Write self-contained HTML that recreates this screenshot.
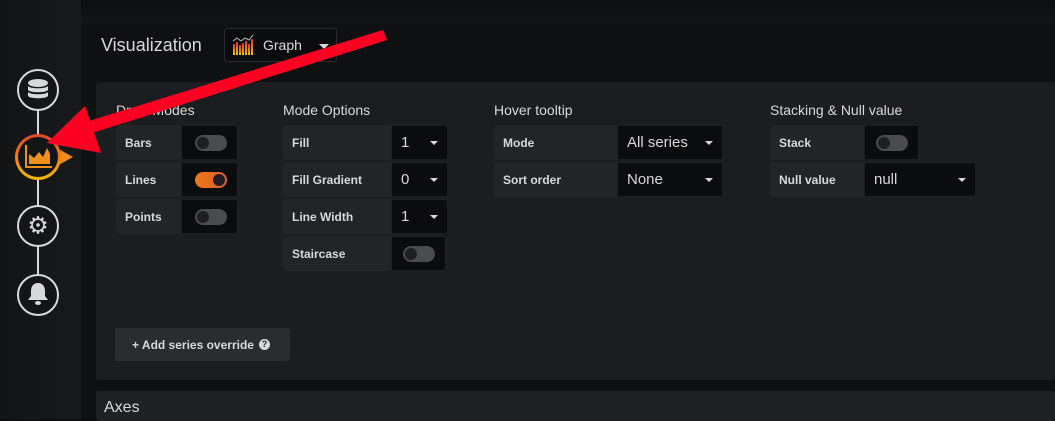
<!DOCTYPE html>
<html><head><style>
*{box-sizing:border-box;margin:0;padding:0}
body{width:1055px;height:419px;overflow:hidden;background:linear-gradient(180deg,#0c0d0f,#161719 30px);font-family:"Liberation Sans",sans-serif;color:#d8d9da;position:relative}
.abs{position:absolute}
.side{left:0;top:0;width:81px;height:419px;background:linear-gradient(90deg,#131416,#18191b)}
.main{left:81px;top:23px;width:974px;height:396px;background:#0f1012}
.panel{left:96px;top:82px;width:959px;height:298px;background:#1c1d20;border-radius:3px}
.axes{left:96px;top:391px;width:959px;height:30px;background:#202124;border-radius:3px;font-size:16px;padding:8px 0 0 8px;color:#d8d9da}
.h{font-size:14px;color:#d8d9da}
.lab{background:#232427;border-radius:3px 0 0 3px;font-size:12px;font-weight:bold;padding-left:9px;display:flex;align-items:center;height:35px;color:#d8d9da}
.val{background:#0b0c0e;border-radius:0 3px 3px 0;height:35px;display:flex;align-items:center;font-size:15px;padding-left:9px;color:#d8d9da;border:1px solid #1e1f22}
.car{position:absolute;right:9px;top:15px;width:0;height:0;border-left:4px solid transparent;border-right:4px solid transparent;border-top:4px solid #d8d9da}
.sw{width:32px;height:16px;border-radius:8px;background:#4a4b4d;position:relative}
.sw::after{content:"";position:absolute;left:2px;top:2px;width:12px;height:12px;border-radius:50%;background:#1e1f21}
.sw.on{background:linear-gradient(90deg,#eb7b18,#e05a2a)}
.sw.on::after{left:18px}
.circ{width:42px;height:42px;border-radius:50%;border:2px solid #d8d9da;left:17px;background:#141517}
</style></head><body>
<div class="abs side"></div>
<div class="abs" style="left:37px;top:108px;width:2px;height:170px;background:#d8d9da"></div>
<div class="abs main"></div>
<div class="abs" style="left:101px;top:35px;font-size:18px">Visualization</div>
<div class="abs" style="left:224px;top:28px;width:113px;height:34px;border:1px solid #2a2b2e;border-radius:3px;background:#0b0c0e"></div>
<svg class="abs" style="left:232px;top:35px" width="22" height="20"><defs><linearGradient id="g" x1="0" y1="1" x2="0" y2="0"><stop offset="0" stop-color="#f5c400"/><stop offset="1" stop-color="#e02f2f"/></linearGradient></defs><g fill="url(#g)"><rect x="1" y="9" width="2" height="11"/><rect x="4" y="7" width="2" height="13"/><rect x="7" y="10" width="2" height="10"/><rect x="10" y="8" width="2" height="12"/><rect x="13" y="6" width="2" height="14"/><rect x="16" y="9" width="2" height="11"/><rect x="19" y="4" width="2" height="16"/></g><polyline points="1,6 5,3 9,6 13,3 17,5 21,0" fill="none" stroke="#bbb" stroke-width="1"/></svg>
<div class="abs" style="left:263px;top:37px;font-size:14px">Graph</div>
<div class="abs" style="left:319px;top:44px;border-left:5px solid transparent;border-right:5px solid transparent;border-top:5px solid #d8d9da"></div>
<div class="abs panel"></div>
<div class="abs h" style="left:116px;top:102px">Draw Modes</div>
<div class="abs h" style="left:283px;top:102px">Mode Options</div>
<div class="abs h" style="left:494px;top:102px">Hover tooltip</div>
<div class="abs h" style="left:770px;top:102px">Stacking &amp; Null value</div>

<div class="abs lab" style="left:116px;top:125px;width:65px">Bars</div><div class="abs val" style="left:181px;top:125px;width:57px"><div class="sw" style="margin-left:4px"></div></div>
<div class="abs lab" style="left:116px;top:162px;width:65px">Lines</div><div class="abs val" style="left:181px;top:162px;width:57px"><div class="sw on" style="margin-left:4px"></div></div>
<div class="abs lab" style="left:116px;top:199px;width:65px">Points</div><div class="abs val" style="left:181px;top:199px;width:57px"><div class="sw" style="margin-left:4px"></div></div>

<div class="abs lab" style="left:283px;top:125px;width:108px">Fill</div><div class="abs val" style="left:391px;top:125px;width:57px">1<div class="car"></div></div>
<div class="abs lab" style="left:283px;top:162px;width:108px">Fill Gradient</div><div class="abs val" style="left:391px;top:162px;width:57px">0<div class="car"></div></div>
<div class="abs lab" style="left:283px;top:199px;width:108px">Line Width</div><div class="abs val" style="left:391px;top:199px;width:57px">1<div class="car"></div></div>
<div class="abs lab" style="left:283px;top:236px;width:108px">Staircase</div><div class="abs val" style="left:391px;top:236px;width:55px"><div class="sw" style="margin-left:2px"></div></div>

<div class="abs lab" style="left:494px;top:125px;width:123px">Mode</div><div class="abs val" style="left:617px;top:125px;width:106px">All series<div class="car"></div></div>
<div class="abs lab" style="left:494px;top:162px;width:123px">Sort order</div><div class="abs val" style="left:617px;top:162px;width:106px">None<div class="car"></div></div>

<div class="abs lab" style="left:770px;top:125px;width:94px">Stack</div><div class="abs val" style="left:864px;top:125px;width:55px"><div class="sw" style="margin-left:2px"></div></div>
<div class="abs lab" style="left:770px;top:162px;width:94px">Null value</div><div class="abs val" style="left:864px;top:162px;width:112px">null<div class="car"></div></div>

<div class="abs" style="left:115px;top:328px;width:175px;height:33px;background:#2b2c2f;border-radius:3px;font-size:12px;font-weight:bold;display:flex;align-items:center;padding-left:17px">+ Add series override <span style="display:inline-block;width:11px;height:11px;border-radius:50%;background:#d8d9da;color:#2b2c2f;font-size:9px;text-align:center;line-height:11px;margin-left:5px">?</span></div>
<div class="abs axes">Axes</div>

<div class="abs circ" style="top:69px"></div>
<svg class="abs" style="left:27px;top:78px" width="22" height="24"><g fill="#d8d9da"><ellipse cx="11" cy="5" rx="10" ry="4"/><path d="M1 8c2 3 18 3 20 0v4c-2 3-18 3-20 0z"/><path d="M1 14c2 3 18 3 20 0v4c-2 3-18 3-20 0z"/></g></svg>
<div class="abs" style="left:55px;top:147px;border-top:10px solid transparent;border-bottom:10px solid transparent;border-left:18px solid #f08a1c"></div>
<div class="abs" style="left:15px;top:134px;width:46px;height:46px;border-radius:50%;background:linear-gradient(180deg,#e4452a,#f5b800)"></div>
<div class="abs" style="left:18px;top:137px;width:40px;height:40px;border-radius:50%;background:#141517"></div>
<svg class="abs" style="left:24px;top:143px" width="30" height="26"><path d="M2 2v22h26" fill="none" stroke="#f0901c" stroke-width="2"/><path d="M5 21V11l5 4 5-6 4 5 4-9 3 6v10z" fill="#f0901c"/></svg>
<div class="abs circ" style="top:205px"></div>
<div class="abs" style="left:38px;top:226px;transform:translate(-50%,-50%);font-size:24px;color:#d8d9da">⚙</div>
<div class="abs circ" style="top:274px"></div>
<svg class="abs" style="left:27px;top:282px" width="22" height="24"><path d="M11 1c-5 0-7 4-7 8v5l-3 4h20l-3-4V9c0-4-2-8-7-8z" fill="#d8d9da"/><ellipse cx="11" cy="21" rx="3" ry="2" fill="#d8d9da"/></svg>

<svg class="abs" style="left:0;top:0" width="1055" height="419"><polygon points="383,30 387,40 92,133 47,143 85,107 89,121" fill="#fe0122"/><polygon points="47,143 85,106 101,153" fill="#fe0122"/></svg>
</body></html>
